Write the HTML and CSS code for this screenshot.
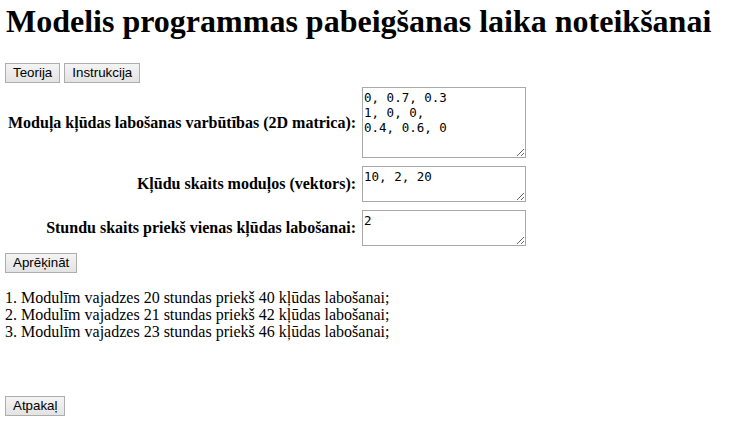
FILE: index.html
```html
<!DOCTYPE html>
<html lang="lv">
<head>
<meta charset="utf-8">
<title>Modelis programmas pabeigšanas laika noteikšanai</title>
<link rel="stylesheet" href="styles.css">
</head>
<body>
<div class="page">
  <h1 class="title">Modelis programmas pabeigšanas laika noteikšanai</h1>
  <div class="nav">
    <button class="btn">Teorija</button>
    <button class="btn">Instrukcija</button>
  </div>
  <table class="form">
    <tr>
      <th class="label">Moduļa kļūdas labošanas varbūtības (2D matrica):</th>
      <td class="field"><textarea class="input input-tall">0, 0.7, 0.3
1, 0, 0,
0.4, 0.6, 0</textarea></td>
    </tr>
    <tr>
      <th class="label">Kļūdu skaits moduļos (vektors):</th>
      <td class="field"><textarea class="input input-short">10, 2, 20</textarea></td>
    </tr>
    <tr>
      <th class="label">Stundu skaits priekš vienas kļūdas labošanai:</th>
      <td class="field"><textarea class="input input-short">2</textarea></td>
    </tr>
  </table>
  <div class="actions"><button class="btn">Aprēķināt</button></div>
  <div class="results">
    <div>1. Modulīm vajadzes 20 stundas priekš 40 kļūdas labošanai;</div>
    <div>2. Modulīm vajadzes 21 stundas priekš 42 kļūdas labošanai;</div>
    <div>3. Modulīm vajadzes 23 stundas priekš 46 kļūdas labošanai;</div>
  </div>
  <div class="back"><button class="btn">Atpakaļ</button></div>
</div>
</body>
</html>
```
FILE: styles.css
```css
html, body {
  margin: 0;
  padding: 0;
  background: #ffffff;
}
body {
  font-family: "Liberation Serif", "Times New Roman", serif;
  font-size: 16px;
  color: #000;
}
.page {
  padding: 0 5px;
}
.title {
  font-size: 32px;
  font-weight: bold;
  margin: 0;
  padding: 3px 0 0 1px;
  line-height: 37px;
}
.nav {
  margin-top: 23px;
  display: flex;
  gap: 4px;
}
.btn {
  font-family: "Liberation Sans", Arial, sans-serif;
  font-size: 13.33px;
  color: #000;
  height: 20px;
  padding: 0 7px;
  border: 1px solid #adadad;
  border-radius: 0;
  background: linear-gradient(#f4f4f4, #e3e3e3);
  line-height: 18px;
}
.form {
  border-collapse: separate;
  border-spacing: 2px;
  margin-top: -1px;
}
.label {
  text-align: right;
  font-weight: bold;
  font-size: 16px;
  padding: 1px;
  vertical-align: middle;
}
.field {
  padding: 3px 1px 3px 3px;
}
.input {
  display: block;
  width: 164px;
  box-sizing: border-box;
  border: 1px solid #a9a9a9;
  font-family: "DejaVu Sans Mono", "Liberation Mono", monospace;
  font-size: 12.5px;
  line-height: 15px;
  padding: 2px 1px;
  margin: 0;
  resize: both;
}
.input-tall { height: 71px; }
.input-short { height: 36px; }
.actions {
  margin-top: 2px;
}
.results {
  margin-top: 16px;
  line-height: 17px;
}
.back {
  margin-top: 56px;
}
```
